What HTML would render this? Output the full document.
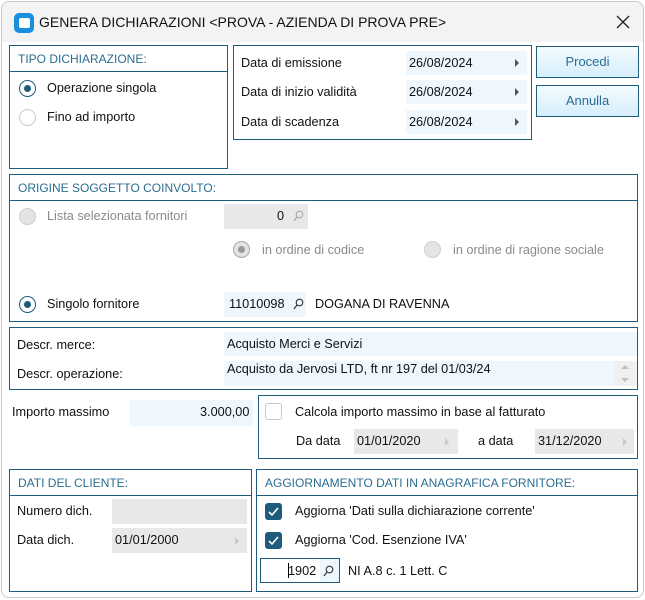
<!DOCTYPE html>
<html><head><meta charset="utf-8"><style>
*{box-sizing:border-box;margin:0;padding:0}
body{width:645px;height:600px;background:#fff;font-family:"Liberation Sans","DejaVu Sans",sans-serif;font-size:12.7px;color:#111;position:relative;overflow:hidden}
.win{position:absolute;left:1px;top:1px;width:643px;height:597px;border:1px solid #c8c8c8;border-radius:8px;background:#fff;overflow:hidden}
.title{position:absolute;left:0;top:0;width:100%;height:40px;background:#f3f3f3}
.a{position:absolute;white-space:nowrap}
.box{position:absolute;border:1px solid #1f5b7a}
.hd{position:absolute;left:0;right:0;top:0;border-bottom:1px solid #1f5b7a;color:#2a6d92;padding-left:8px;font-size:12px}
.f{position:absolute;background:#eef7fd}
.g{position:absolute;background:#e8e8e8}
.r{position:absolute;width:17px;height:17px;border-radius:50%;border:1.5px solid #1f5b7a;background:#fff}
.r.on::after{content:"";position:absolute;left:3.5px;top:3.5px;width:7px;height:7px;border-radius:50%;background:#1f5b7a}
.r.dis{border-color:#cfcfcf;background:#e4e4e4}
.r.dison{border-color:#a8a8a8;background:#e4e4e4}
.r.dison::after{content:"";position:absolute;left:3.5px;top:3.5px;width:7px;height:7px;border-radius:50%;background:#9a9a9a}
.cb{position:absolute;width:17px;height:17px;border-radius:3px;background:#1f5b7a}
.cb svg{position:absolute;left:2px;top:2px}
.tri{position:absolute;width:0;height:0;border-top:4px solid transparent;border-bottom:4px solid transparent;border-left:4px solid #555}
.btn{position:absolute;border:1px solid #1f5b7a;background:linear-gradient(#f4fbff,#d6eefb);color:#2a6d92;text-align:center;font-size:13px}
.gray{color:#8a8a8a}
</style></head><body>
<div class="win">
<div class="title"></div>
<div class="a" style="left:12px;top:11px;width:20px;height:20px;background:#1a8fe0;border-radius:5px"><div style="position:absolute;left:5px;top:5px;width:11px;height:10px;background:#fff;border-radius:2px"></div></div>
<div class="a" style="left:37px;top:12px;font-size:14px">GENERA DICHIARAZIONI &lt;PROVA - AZIENDA DI PROVA PRE&gt;</div>
<svg class="a" style="left:614px;top:13px" width="14" height="14"><path d="M1 1L13 13M13 1L1 13" stroke="#222" stroke-width="1.3"/></svg>
</div>

<div class="box" style="left:9px;top:45px;width:219px;height:124px"><div class="hd" style="height:26px;line-height:26px">TIPO DICHIARAZIONE:</div></div>
<div class="r on" style="left:19px;top:80px"></div><div class="a" style="left:47px;top:81px">Operazione singola</div>
<div class="r dis" style="left:19px;top:109px;background:#fff;border-color:#ccc"></div><div class="a" style="left:47px;top:110px">Fino ad importo</div>

<div class="box" style="left:233px;top:45px;width:299px;height:95px"></div>
<div class="a" style="left:241px;top:56px">Data di emissione</div>
<div class="a" style="left:241px;top:85px">Data di inizio validità</div>
<div class="a" style="left:241px;top:115px">Data di scadenza</div>
<div class="f" style="left:406px;top:51px;width:121px;height:24px"></div><div class="a" style="left:409px;top:56px">26/08/2024</div><div class="tri" style="left:515px;top:59px"></div>
<div class="f" style="left:406px;top:80px;width:121px;height:24px"></div><div class="a" style="left:409px;top:85px">26/08/2024</div><div class="tri" style="left:515px;top:88px"></div>
<div class="f" style="left:406px;top:110px;width:121px;height:24px"></div><div class="a" style="left:409px;top:115px">26/08/2024</div><div class="tri" style="left:515px;top:118px"></div>

<div class="btn" style="left:536px;top:46px;width:103px;height:32px;line-height:30px">Procedi</div>
<div class="btn" style="left:536px;top:85px;width:103px;height:32px;line-height:30px">Annulla</div>

<div class="box" style="left:9px;top:174px;width:629px;height:148px"><div class="hd" style="height:26px;line-height:26px">ORIGINE SOGGETTO COINVOLTO:</div></div>
<div class="r dis" style="left:19px;top:208px"></div><div class="a gray" style="left:47px;top:209px">Lista selezionata fornitori</div>
<div class="g" style="left:224px;top:204px;width:84px;height:25px"></div><div class="a" style="left:277px;top:209px">0</div>
<svg class="a" style="left:293px;top:210px" width="11" height="12"><circle cx="6.5" cy="4.5" r="3.3" fill="none" stroke="#aaa" stroke-width="1.1"/><path d="M4 7L1 11" stroke="#aaa" stroke-width="1.2"/></svg>
<div class="r dison" style="left:233px;top:241px"></div><div class="a gray" style="left:262px;top:243px">in ordine di codice</div>
<div class="r dis" style="left:424px;top:241px"></div><div class="a gray" style="left:453px;top:243px">in ordine di ragione sociale</div>
<div class="r on" style="left:19px;top:296px"></div><div class="a" style="left:47px;top:297px">Singolo fornitore</div>
<div class="f" style="left:224px;top:292px;width:82px;height:25px"></div><div class="a" style="left:229px;top:297px">11010098</div>
<svg class="a" style="left:293px;top:298px" width="11" height="12"><circle cx="6.5" cy="4.5" r="3.3" fill="none" stroke="#333" stroke-width="1.1"/><path d="M4 7L1 11" stroke="#333" stroke-width="1.2"/></svg>
<div class="a" style="left:315px;top:297px">DOGANA DI RAVENNA</div>

<div class="box" style="left:9px;top:327px;width:629px;height:63px"></div>
<div class="a" style="left:17px;top:338px">Descr. merce:</div>
<div class="a" style="left:17px;top:367px">Descr. operazione:</div>
<div class="f" style="left:224px;top:332px;width:413px;height:24px"></div><div class="a" style="left:227px;top:337px">Acquisto Merci e Servizi</div>
<div class="f" style="left:224px;top:361px;width:413px;height:25px"></div><div class="a" style="left:227px;top:362px">Acquisto da Jervosi LTD, ft nr 197 del 01/03/24</div>
<div class="a" style="left:614px;top:361px;width:22px;height:25px;background:#f0f0f0"></div>
<svg class="a" style="left:620px;top:363px" width="10" height="22"><path d="M1 6L5 2L9 6Z M1 15L5 19L9 15Z" fill="#c0c0c0"/></svg>

<div class="a" style="left:12px;top:405px">Importo massimo</div>
<div class="f" style="left:130px;top:400px;width:123px;height:26px"></div><div class="a" style="left:200px;top:405px">3.000,00</div>
<div class="box" style="left:258px;top:395px;width:380px;height:64px"></div>
<div class="a" style="left:265px;top:403px;width:17px;height:17px;border:1.5px solid #c8c8c8;border-radius:3px"></div>
<div class="a" style="left:295px;top:405px">Calcola importo massimo in base al fatturato</div>
<div class="a" style="left:296px;top:434px">Da data</div>
<div class="g" style="left:354px;top:429px;width:104px;height:25px"></div><div class="a" style="left:357px;top:434px">01/01/2020</div><div class="tri" style="left:445px;top:438px;border-left-color:#c8c8c8"></div>
<div class="a" style="left:478px;top:434px">a data</div>
<div class="g" style="left:535px;top:429px;width:99px;height:25px"></div><div class="a" style="left:538px;top:434px">31/12/2020</div><div class="tri" style="left:623px;top:438px;border-left-color:#c8c8c8"></div>

<div class="box" style="left:9px;top:469px;width:243px;height:123px"><div class="hd" style="height:26px;line-height:26px">DATI DEL CLIENTE:</div></div>
<div class="a" style="left:17px;top:504px">Numero dich.</div>
<div class="g" style="left:112px;top:499px;width:135px;height:25px"></div>
<div class="a" style="left:17px;top:533px">Data dich.</div>
<div class="g" style="left:112px;top:528px;width:135px;height:25px"></div><div class="a" style="left:115px;top:533px">01/01/2000</div><div class="tri" style="left:235px;top:537px;border-left-color:#c8c8c8"></div>

<div class="box" style="left:256px;top:469px;width:382px;height:123px"><div class="hd" style="height:26px;line-height:26px">AGGIORNAMENTO DATI IN ANAGRAFICA FORNITORE:</div></div>
<div class="cb" style="left:265px;top:503px"><svg width="13" height="13"><path d="M2 7L5 10L11 3" fill="none" stroke="#fff" stroke-width="1.6"/></svg></div>
<div class="a" style="left:295px;top:504px">Aggiorna 'Dati sulla dichiarazione corrente'</div>
<div class="cb" style="left:265px;top:532px"><svg width="13" height="13"><path d="M2 7L5 10L11 3" fill="none" stroke="#fff" stroke-width="1.6"/></svg></div>
<div class="a" style="left:295px;top:533px">Aggiorna 'Cod. Esenzione IVA'</div>
<div class="a" style="left:260px;top:558px;width:80px;height:25px;border:1px solid #1f5b7a;background:#fff"></div>
<div class="a" style="left:320px;top:559px;width:19px;height:23px;background:#eef7fd"></div>
<div class="a" style="left:288px;top:564px">1902</div>
<div class="a" style="left:288px;top:563px;width:1px;height:15px;background:#000"></div>
<svg class="a" style="left:323px;top:565px" width="11" height="12"><circle cx="6.5" cy="4.5" r="3.3" fill="none" stroke="#333" stroke-width="1.1"/><path d="M4 7L1 11" stroke="#333" stroke-width="1.2"/></svg>
<div class="a" style="left:348px;top:564px">NI A.8 c. 1 Lett. C</div>
</body></html>
